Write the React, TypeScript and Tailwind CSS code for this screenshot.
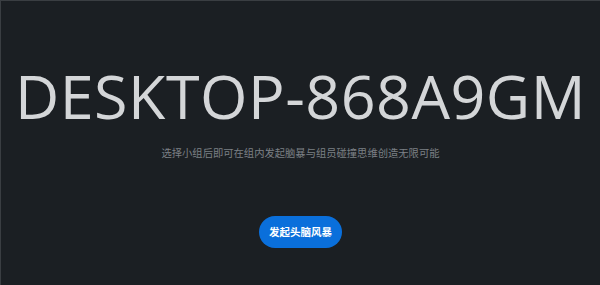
export default function App() {
  return (
    <div className="flex h-[285px] w-[600px] flex-col items-center border-t border-l border-[#3a3e42] bg-[#1b1f23]">
      <h1 className="mt-[57px] text-[61px] font-normal leading-[76px] tracking-[0.5px] text-[#d4d6d8] [font-family:'Open_Sans',sans-serif]">
        DESKTOP-868A9GM
      </h1>
      <p className="mt-[12px] text-[10.3px] leading-[14px] text-[#7c8085] [font-family:'Noto_Sans_CJK_SC',sans-serif]">
        选择小组后即可在组内发起脑暴与组员碰撞思维创造无限可能
      </p>
      <button className="mt-[56px] h-[32px] rounded-full bg-[#0a6fdb] px-[10px] text-[10.5px] font-bold text-white [font-family:'Noto_Sans_CJK_SC',sans-serif]">
        发起头脑风暴
      </button>
    </div>
  );
}
